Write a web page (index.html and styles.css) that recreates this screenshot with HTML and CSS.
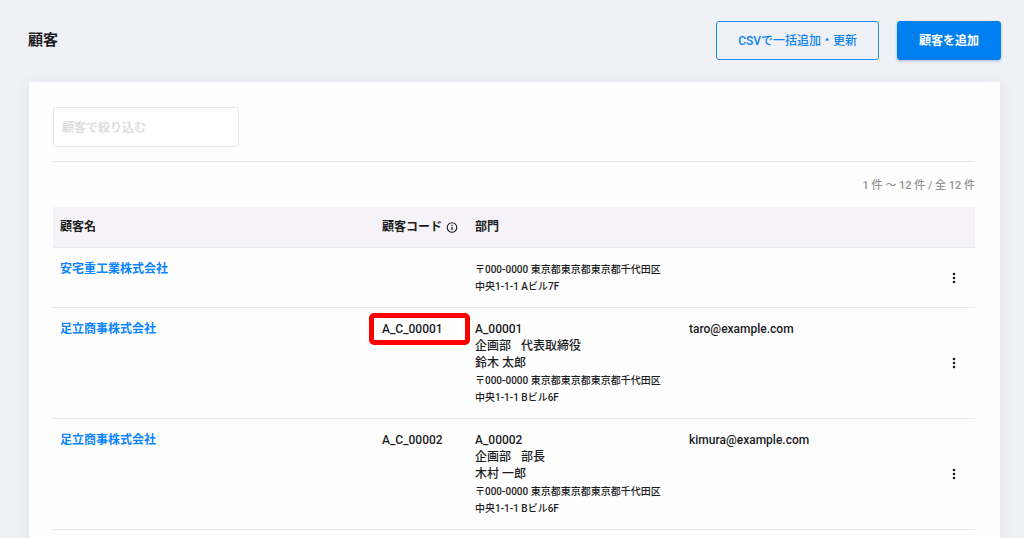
FILE: index.html
```
<!DOCTYPE html>
<html lang="ja">
<head>
<meta charset="utf-8">
<meta name="viewport" content="width=device-width, initial-scale=1">
<title>顧客</title>
<link rel="stylesheet" href="styles.css">
</head>
<body>
<header class="page-header">
  <h1 class="page-title">顧客</h1>
  <div class="actions">
    <button type="button" class="btn btn-outline">CSVで一括追加・更新</button>
    <button type="button" class="btn btn-primary">顧客を追加</button>
  </div>
</header>
<main class="card">
  <div class="filter">
    <input class="filter-input" type="text" placeholder="顧客で絞り込む" aria-label="顧客で絞り込む">
  </div>
  <p class="count">1 件 〜 12 件 / 全 12 件</p>
  <table class="customers">
    <colgroup>
      <col>
      <col class="col-code">
      <col class="col-dept">
      <col class="col-mail">
      <col class="col-menu">
    </colgroup>
    <thead>
      <tr>
        <th scope="col">顧客名</th>
        <th scope="col">
          <span class="head-label">顧客コード
            <svg class="info" viewBox="0 0 24 24" aria-hidden="true"><circle cx="12" cy="11" r="9.5" fill="none" stroke="currentColor" stroke-width="2.2"/><path d="M10.8 9.5h2.4v7h-2.4zM10.8 5.5h2.4v2.4h-2.4z" fill="currentColor"/></svg>
          </span>
        </th>
        <th scope="col">部門</th>
        <td></td>
        <td></td>
      </tr>
    </thead>
    <tbody>
      <tr>
        <td><a class="name" href="#">安宅重工業株式会社</a></td>
        <td></td>
        <td>
          <div class="address">〒000-0000 東京都東京都東京都千代田区<br>中央1-1-1 Aビル7F</div>
        </td>
        <td></td>
        <td class="menu-cell"><button type="button" class="menu" aria-label="メニュー"><svg class="dots" viewBox="0 0 4 12" aria-hidden="true"><circle cx="2" cy="2" r="1.3"/><circle cx="2" cy="6" r="1.3"/><circle cx="2" cy="10" r="1.3"/></svg></button></td>
      </tr>
      <tr>
        <td><a class="name" href="#">足立商事株式会社</a></td>
        <td><span class="code highlighted">A_C_00001</span></td>
        <td>
          <div>A_00001</div>
          <div class="role"><span>企画部</span><span>代表取締役</span></div>
          <div>鈴木 太郎</div>
          <div class="address">〒000-0000 東京都東京都東京都千代田区<br>中央1-1-1 Bビル6F</div>
        </td>
        <td>taro@example.com</td>
        <td class="menu-cell"><button type="button" class="menu" aria-label="メニュー"><svg class="dots" viewBox="0 0 4 12" aria-hidden="true"><circle cx="2" cy="2" r="1.3"/><circle cx="2" cy="6" r="1.3"/><circle cx="2" cy="10" r="1.3"/></svg></button></td>
      </tr>
      <tr>
        <td><a class="name" href="#">足立商事株式会社</a></td>
        <td><span class="code">A_C_00002</span></td>
        <td>
          <div>A_00002</div>
          <div class="role"><span>企画部</span><span>部長</span></div>
          <div>木村 一郎</div>
          <div class="address">〒000-0000 東京都東京都東京都千代田区<br>中央1-1-1 Bビル6F</div>
        </td>
        <td>kimura@example.com</td>
        <td class="menu-cell"><button type="button" class="menu" aria-label="メニュー"><svg class="dots" viewBox="0 0 4 12" aria-hidden="true"><circle cx="2" cy="2" r="1.3"/><circle cx="2" cy="6" r="1.3"/><circle cx="2" cy="10" r="1.3"/></svg></button></td>
      </tr>
    </tbody>
  </table>
</main>
</body>
</html>
```
FILE: styles.css
```
* {
  box-sizing: border-box;
}

body {
  margin: 0;
  padding: 21px 23px 24px 28px;
  background: #f0f1f6;
  color: #1c1c1e;
  font-family: Roboto, "Noto Sans CJK JP", sans-serif;
  font-size: 12px;
  font-weight: 500;
  line-height: 17px;
}

button,
input {
  font: inherit;
}

.page-header {
  display: flex;
  align-items: center;
  justify-content: space-between;
  margin-bottom: 21px;
}

.page-title {
  margin: 0;
  font-size: 15px;
  font-weight: 700;
}

.actions {
  display: flex;
  gap: 18px;
}

.btn {
  padding: 11px 21px 9px;
  border: 1px solid #1f8ff5;
  border-radius: 3px;
  cursor: pointer;
}

.btn-outline {
  background: transparent;
  color: #0a84f0;
}

.btn-primary {
  background: #0080f0;
  border-color: #0080f0;
  color: #fff;
  font-weight: 700;
  box-shadow: 0 1px 3px rgba(0, 60, 140, 0.3);
}

.card {
  padding: 25px 25px 24px 24px;
  border: 1px solid #e9e9f2;
  background: #fefefe;
  box-shadow: 0 2px 12px rgba(60, 60, 110, 0.08);
}

.filter {
  padding-bottom: 14px;
  border-bottom: 1px solid #e6e6ec;
}

.filter-input {
  display: block;
  width: 186px;
  height: 40px;
  padding: 1px 8px 0;
  border: 1px solid #e6e6f0;
  border-radius: 3px;
  background: #fff;
  color: inherit;
}

.filter-input::placeholder {
  color: #dededf;
  font-weight: 700;
}

.count {
  margin: 15px 0 13px;
  color: #929294;
  font-size: 11px;
  text-align: right;
}

.customers {
  width: 100%;
  border-collapse: collapse;
  table-layout: fixed;
}

.col-code {
  width: 93px;
}

.col-dept {
  width: 214px;
}

.col-mail {
  width: 250px;
}

.col-menu {
  width: 43px;
}

.customers th,
.customers td {
  padding: 13px 7px 12px;
  border-bottom: 1px solid #e8e8f0;
  text-align: left;
  vertical-align: top;
}

.customers thead th,
.customers thead td {
  padding: 12px 7px 11px;
  background: #f5f3f7;
}

.customers th {
  font-weight: 700;
}

.customers td.menu-cell {
  padding: 1px 0 0;
  text-align: center;
  vertical-align: middle;
}

.head-label {
  display: flex;
  align-items: center;
  gap: 4px;
  white-space: nowrap;
}

.info {
  flex: none;
  width: 12px;
  height: 12px;
}

.name {
  color: #0a84ff;
  font-weight: 700;
  text-decoration: none;
}

.code {
  position: relative;
}

/* Red frame drawn over the cell, outside the text flow */
.highlighted::after {
  content: "";
  position: absolute;
  inset: -9px -27px -9px -13px;
  border: 5px solid #fe0000;
  border-radius: 5px;
}

.role {
  display: flex;
  gap: 10px;
}

.address {
  font-size: 10px;
}

.menu {
  padding: 4px 8px;
  border: 0;
  background: transparent;
  cursor: pointer;
}

.dots {
  display: block;
  width: 4px;
  height: 12px;
  fill: #1c1c1e;
}
```
